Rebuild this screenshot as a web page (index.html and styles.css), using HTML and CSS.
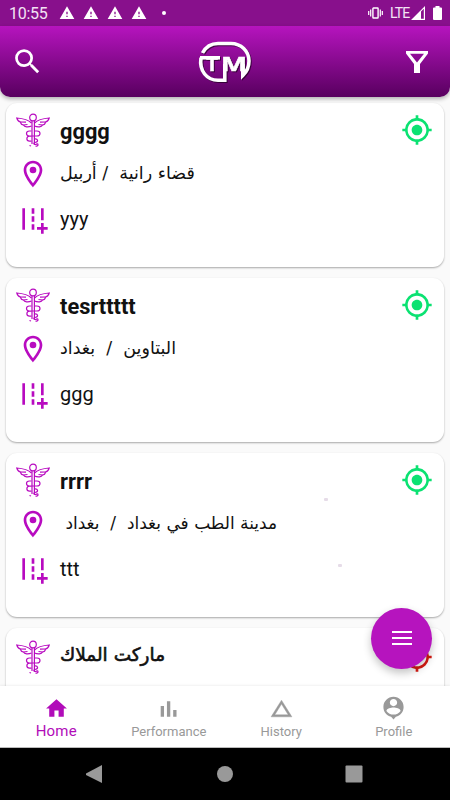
FILE: index.html
```
<!DOCTYPE html>
<html lang="en">
<head>
    <meta charset="UTF-8">
    <meta name="viewport" content="width=device-width, initial-scale=1.0">
    <title>TM</title>
    <link rel="stylesheet" href="styles.css">
</head>
<body>

<!-- icons -->
<svg class="sprite">
    <symbol id="warn" viewBox="0 0 24 24"><path d="M1 21h22L12 2 1 21zm12-3h-2v-2h2v2zm0-4h-2v-4h2v4z"/></symbol>
    <symbol id="caduceus" viewBox="0 0 34 34">
        <g fill="none" stroke="currentColor" stroke-width="1.2">
            <circle cx="17" cy="4.500" r="3.3"/>
            <path d="M16 8V31M18.4 8V31"/>
            <path d="M15.5 10C12 6.500 7 5.500 .8 5 1.500 7.500 3 8.800 4.500 9 4.800 11 6 12 7.500 12 8.500 14 12 14.500 15.500 13"/>
            <path d="M18.500 10C22 6.500 27 5.500 33.200 5 32.500 7.500 31 8.800 29.500 9 29.200 11 28 12 26.500 12 25.500 14 22 14.500 18.500 13"/>
            <path d="M4.500 9l5.500 .2M7.500 12l4-.5M29.500 9l-5.500 .2M26.500 12l-4-.5"/>
            <path d="M15.500 18h-2c-4 0-4 5 0 5h7.500c4 0 4-5 0-5h-2M15.500 23.200h-2c-3.500 .3-3.500 5 0 5h2"/>
            <path d="M18.500 26c3.500-.5 4 2.700 1.500 3.200-2.500 .4-3 2.300-.5 2.300 1.500-.5 2.500-1.500 2.500 .2 0 1-1 1.500-2.500 1.500"/>
            <path d="M13.500 32.500l1.500 .500"/>
        </g>
    </symbol>
    <symbol id="pin" viewBox="0 0 24 24"><path d="M12 2C8.130 2 5 5.130 5 9c0 5.250 7 13 7 13s7-7.750 7-13c0-3.870-3.130-7-7-7zM7 9c0-2.760 2.240-5 5-5s5 2.240 5 5c0 2.880-2.880 7.190-5 9.880C9.920 16.210 7 11.850 7 9z"/><circle cx="12" cy="9" r="2.500"/></symbol>
    <symbol id="road" viewBox="0 0 24 24"><path d="M20 18v-3h-2v3h-3v2h3v3h2v-3h3v-2zM18 4h2v9h-2zM4 4h2v16H4zM11 4h2v4h-2zM11 10h2v4h-2zM11 16h2v4h-2z"/></symbol>
    <symbol id="gps" viewBox="0 0 24 24"><path d="M12 8c-2.210 0-4 1.790-4 4s1.790 4 4 4 4-1.790 4-4-1.790-4-4-4zm8.940 3A8.994 8.994 0 0 0 13 3.060V1h-2v2.060A8.994 8.994 0 0 0 3.060 11H1v2h2.060A8.994 8.994 0 0 0 11 20.940V23h2v-2.060A8.994 8.994 0 0 0 20.940 13H23v-2h-2.060zM12 19c-3.870 0-7-3.130-7-7s3.130-7 7-7 7 3.130 7 7-3.130 7-7 7z"/></symbol>
</svg>

<div class="status">
    <span class="time">10:55</span>
    <div class="notifs">
        <svg><use href="#warn"/></svg>
        <svg><use href="#warn"/></svg>
        <svg><use href="#warn"/></svg>
        <svg><use href="#warn"/></svg>
        <i class="dot"></i>
    </div>
    <svg class="vibrate" viewBox="0 0 15 12"><path d="M.700 4v4M2.700 2.500v7M12.300 2.500v7M14.300 4v4" stroke="currentColor" stroke-width="1.200"/><rect x="4.900" y="1" width="5.200" height="10" rx=".5" fill="none" stroke="currentColor" stroke-width="1.400"/></svg>
    <span class="lte">LTE</span>
    <svg class="signal" viewBox="0 0 14 14"><path fill-rule="evenodd" d="M0 14L14 0v14zM10 5.500V12.800h2.800V2.800z"/></svg>
    <svg class="battery" viewBox="0 0 9 14"><path d="M2.500 0h4v1.500H8q1 0 1 1V13q0 1-1 1H1q-1 0-1-1V2.500q0-1 1-1h1.500z"/></svg>
</div>

<header>
    <svg class="search" viewBox="0 0 24 24"><path d="M15.500 14h-.790l-.280-.270A6.471 6.471 0 0 0 16 9.500 6.500 6.500 0 1 0 9.500 16c1.610 0 3.090-.590 4.230-1.570l.270.280v.790l5 4.990L20.490 19l-4.990-5zm-6 0C7.010 14 5 11.990 5 9.500S7.010 5 9.500 5 14 7.010 14 9.500 11.990 14 9.500 14z"/></svg>
    <svg class="logo" viewBox="0 0 54 44">
        <g class="ring">
            <path d="M4.500 13C8.500 5.500 14 3.500 20 3.500h13C43 3.500 51 11 51 21c0 6-2 10.500-6.200 14.500V24"/>
            <path d="M3 17.800C1 31 9 40.300 20 40.300h6.800V24"/>
            <path d="M2 17.800h20"/>
        </g>
        <text x="14" y="30.500" text-anchor="middle">T</text>
        <text x="23" y="30.500" textLength="26" lengthAdjust="spacingAndGlyphs">M</text>
    </svg>
    <svg class="filter" viewBox="0 0 22 22"><path fill-rule="evenodd" d="M0 0h22v2.500L14 13v9H8v-9L0 2.500zM4 2.800l7 8.700 7-8.700z"/></svg>
</header>

<main>
    <div class="card">
        <div class="row head">
            <svg class="caduceus"><use href="#caduceus"/></svg>
            <h2>gggg</h2>
            <svg class="gps"><use href="#gps"/></svg>
        </div>
        <div class="row place">
            <svg><use href="#pin"/></svg>
            <p class="ar" dir="rtl">قضاء رانية &nbsp;/ أربيل</p>
        </div>
        <div class="row street">
            <svg><use href="#road"/></svg>
            <p>yyy</p>
        </div>
    </div>

    <div class="card">
        <div class="row head">
            <svg class="caduceus"><use href="#caduceus"/></svg>
            <h2>tesrttttt</h2>
            <svg class="gps"><use href="#gps"/></svg>
        </div>
        <div class="row place">
            <svg><use href="#pin"/></svg>
            <p class="ar" dir="rtl">البتاوين &nbsp;/ &nbsp;بغداد</p>
        </div>
        <div class="row street">
            <svg><use href="#road"/></svg>
            <p>ggg</p>
        </div>
    </div>

    <div class="card">
        <div class="row head">
            <svg class="caduceus"><use href="#caduceus"/></svg>
            <h2>rrrr</h2>
            <svg class="gps"><use href="#gps"/></svg>
        </div>
        <div class="row place">
            <svg><use href="#pin"/></svg>
            <p class="ar long" dir="rtl">مدينة الطب في بغداد &nbsp;/ &nbsp;بغداد&nbsp;</p>
        </div>
        <div class="row street">
            <svg><use href="#road"/></svg>
            <p>ttt</p>
        </div>
        <i class="speck s1"></i>
        <i class="speck s2"></i>
    </div>

    <div class="card last">
        <div class="row head">
            <svg class="caduceus"><use href="#caduceus"/></svg>
            <h2 class="ar" dir="rtl">ماركت الملاك</h2>
            <svg class="gps off"><use href="#gps"/></svg>
        </div>
    </div>
</main>

<button class="fab"><i></i><i></i><i></i></button>

<nav class="tabs">
    <a class="tab active">
        <svg viewBox="0 0 24 24"><path d="M10 20v-6h4v6h5v-8h3L12 3 2 12h3v8z"/></svg>
        <span>Home</span>
    </a>
    <a class="tab">
        <svg viewBox="0 0 24 24"><path d="M4.500 9.500h3.200V20H4.500zM16.500 13.500h3.200V20h-3.200zM10.500 5h3.200v15h-3.200z"/></svg>
        <span>Performance</span>
    </a>
    <a class="tab">
        <svg viewBox="0 0 24 24"><path d="M12 7.770L18.390 18H5.610L12 7.770M12 4L2 20h20L12 4z" stroke="currentColor" stroke-width=".4"/></svg>
        <span>History</span>
    </a>
    <a class="tab">
        <svg viewBox="0 0 24 24"><path fill-rule="evenodd" d="M12 .8C6.700 .8 2.300 5 2.300 10.500c0 4.700 3.100 8.400 7.400 9.400L12 22.500l2.300-2.600c4.300-1 7.400-4.700 7.400-9.400C21.700 5 17.300 .8 12 .8zM12 2.800c2 0 3.500 1.600 3.500 3.500S14 9.800 12 9.800 8.500 8.200 8.500 6.300 10 2.800 12 2.800zM12 17.800c-2.600 0-5.300-1.200-6.800-3.500 .3-2.200 4.300-3.200 6.800-3.200s6.500 1 6.800 3.200C17.300 16.600 14.600 17.800 12 17.800z"/></svg>
        <span>Profile</span>
    </a>
</nav>

<div class="sysnav">
    <svg viewBox="0 0 18 18"><path d="M16 0v18L0 10V8.500z"/></svg>
    <svg viewBox="0 0 18 18"><circle cx="9" cy="9" r="8"/></svg>
    <svg viewBox="0 0 18 18"><rect x=".5" y=".5" width="17" height="17" rx="1"/></svg>
</div>

</body>
</html>
```
FILE: styles.css
```
* {
    margin: 0;
    padding: 0;
    box-sizing: border-box;
}

body {
    width: 450px;
    height: 800px;
    overflow: hidden;
    display: flex;
    flex-direction: column;
    background: #fafafa;
    font-family: Roboto, "DejaVu Sans", sans-serif;
    color: #111;
}

svg {
    display: block;
    fill: currentColor;
    flex-shrink: 0;
}

.sprite {
    position: absolute;
    width: 0;
    height: 0;
}

.status {
    height: 26px;
    flex-shrink: 0;
    background: #88108c;
    color: #fff;
    display: flex;
    align-items: center;
    padding: 0 8px 0 9px;
}

.time {
    font-size: 16px;
    width: 50px;
    letter-spacing: -0.3px;
    padding-top: 1px;
    color: #f3e3f4;
}

.notifs {
    display: flex;
    align-items: center;
    gap: 8px;
    flex: 1;
}

.notifs svg {
    width: 16px;
    height: 16px;
}

.dot {
    width: 4px;
    height: 4px;
    border-radius: 50%;
    background: #fff;
    margin-left: 7px;
}

.vibrate {
    width: 15px;
    height: 12px;
    margin-right: 7px;
}

.lte {
    font-size: 14px;
    letter-spacing: -0.9px;
    width: 21px;
    color: #f3e3f4;
}

.signal {
    width: 14px;
    height: 14px;
    margin-right: 8px;
}

.battery {
    width: 9px;
    height: 14px;
}

header {
    height: 71px;
    flex-shrink: 0;
    display: flex;
    align-items: center;
    justify-content: space-between;
    padding: 0 22px 0 11px;
    color: #fff;
    background: linear-gradient(#b614be, #58005f);
    border-radius: 0 0 10px 10px;
    box-shadow: 0 2px 4px rgba(0, 0, 0, 0.3);
    z-index: 1;
}

.search {
    width: 33px;
    height: 33px;
}

.logo {
    width: 54px;
    height: 44px;
    overflow: visible;
    filter: drop-shadow(1px 1px 0.5px rgba(30, 0, 30, 0.7));
}

.ring {
    fill: none;
    stroke: #fff;
    stroke-width: 3.6;
}

.logo text {
    font-family: "Open Sans", sans-serif;
    font-weight: 700;
    font-size: 20px;
    stroke: #fff;
    stroke-width: 0.5px;
}

.filter {
    width: 22px;
    height: 22px;
}

main {
    flex: 1;
    min-height: 0;
    overflow: hidden;
    padding: 6px 6px 0;
    display: flex;
    flex-direction: column;
    gap: 11px;
}

.card {
    position: relative;
    height: 164px;
    flex-shrink: 0;
    background: #fff;
    border-radius: 11px;
    box-shadow: 0 1px 2px rgba(0, 0, 0, 0.33);
    padding: 10px 11px;
    color: #b80bc0;
}

.row {
    display: flex;
    align-items: center;
}

.row svg {
    width: 32px;
    height: 32px;
    margin-right: 11px;
}

.row .caduceus {
    width: 34px;
    height: 34px;
    margin: 0 10px 0 -1px;
}

.row h2,
.row p {
    color: #111;
    white-space: pre;
}

.row.head {
    height: 34px;
}

.row h2 {
    font-size: 21.8px;
    font-weight: 700;
    line-height: 34px;
    padding-top: 4px;
}

.row.place {
    height: 54px;
}

.row.street {
    height: 38px;
    margin-top: -1px;
}

.row p {
    font-size: 20px;
    line-height: 30px;
}

.row .gps {
    color: #0be272;
    margin: 0 0 0 auto;
}

.row .off {
    color: #d81b13;
    margin-top: 4px;
}

.row .ar {
    font-family: "DejaVu Sans", sans-serif;
}

.row p.ar {
    font-size: 17.5px;
    padding-bottom: 2px;
}

.row p.long {
    font-size: 17px;
}

/* no real bold here, a thin stroke is closer to the app font */
.row h2.ar {
    font-size: 18.5px;
    font-weight: 400;
    padding-top: 0;
    -webkit-text-stroke: 0.6px #111;
}

.last .caduceus {
    margin-top: 4px;
}

.speck {
    position: absolute;
    width: 4px;
    height: 3px;
    background: #e6dce8;
    border-radius: 1px;
}

.s1 {
    left: 318px;
    top: 45px;
}

.s2 {
    left: 332px;
    top: 111px;
}

.fab {
    position: absolute;
    right: 18px;
    top: 607.5px;
    width: 61px;
    height: 61px;
    border: none;
    border-radius: 50%;
    background: #b614be;
    box-shadow: 0 4px 9px rgba(0, 0, 0, 0.24);
    display: flex;
    flex-direction: column;
    align-items: center;
    justify-content: center;
    gap: 3.5px;
}

.fab i {
    width: 20px;
    height: 2.3px;
    background: #fff;
}

.tabs {
    height: 62px;
    flex-shrink: 0;
    display: flex;
    background: #fff;
    border-bottom: 1px solid #bbb;
    box-shadow: 0 -1px 2px rgba(0, 0, 0, 0.06);
    z-index: 1;
}

.tab {
    flex: 1;
    display: flex;
    flex-direction: column;
    align-items: center;
    padding-top: 10px;
    color: #999;
    font-size: 13px;
}

.tab svg {
    width: 25px;
    height: 25px;
}

.tab span {
    line-height: 21px;
}

.tab.active {
    color: #b10cb9;
    font-size: 15px;
    letter-spacing: 0.2px;
}

.tab.active span {
    line-height: 20px;
}

.sysnav {
    height: 52px;
    flex-shrink: 0;
    background: #000;
    color: #999;
    display: flex;
    align-items: center;
    justify-content: space-between;
    padding: 0 87px 0 86px;
}

.sysnav svg {
    width: 18px;
    height: 18px;
}
```
